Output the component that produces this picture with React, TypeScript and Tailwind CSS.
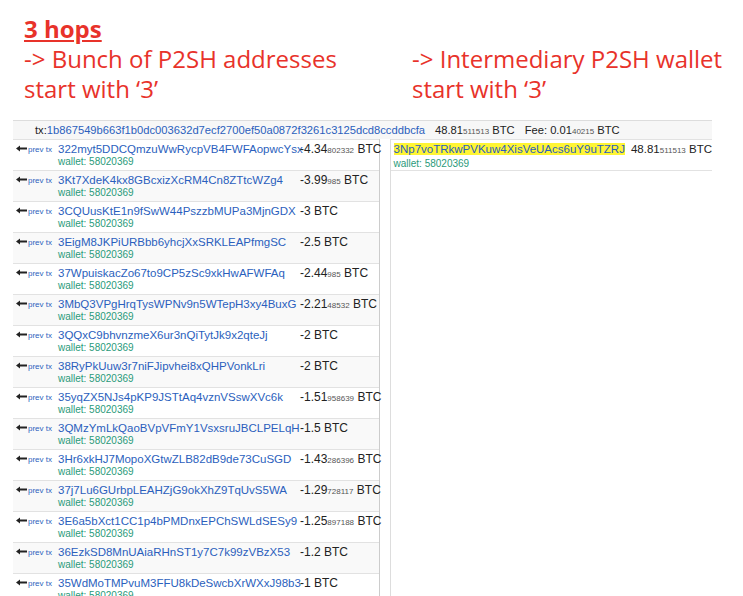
const rows: [string, string, string][] = [
  ["322myt5DDCQmzuWwRycpVB4FWFAopwcYsx", "-4.34", "802332"],
  ["3Kt7XdeK4kx8GBcxizXcRM4Cn8ZTtcWZg4", "-3.99", "985"],
  ["3CQUusKtE1n9fSwW44PszzbMUPa3MjnGDX", "-3", ""],
  ["3EigM8JKPiURBbb6yhcjXxSRKLEAPfmgSC", "-2.5", ""],
  ["37WpuiskacZo67to9CP5zSc9xkHwAFWFAq", "-2.44", "985"],
  ["3MbQ3VPgHrqTysWPNv9n5WTepH3xy4BuxG", "-2.21", "48532"],
  ["3QQxC9bhvnzmeX6ur3nQiTytJk9x2qteJj", "-2", ""],
  ["38RyPkUuw3r7niFJipvhei8xQHPVonkLri", "-2", ""],
  ["35yqZX5NJs4pKP9JSTtAq4vznVSswXVc6k", "-1.51", "958639"],
  ["3QMzYmLkQaoBVpVFmY1VsxsruJBCLPELqH", "-1.5", ""],
  ["3Hr6xkHJ7MopoXGtwZLB82dB9de73CuSGD", "-1.43", "286396"],
  ["37j7Lu6GUrbpLEAHZjG9okXhZ9TqUvS5WA", "-1.29", "728117"],
  ["3E6a5bXct1CC1p4bPMDnxEPChSWLdSESy9", "-1.25", "897188"],
  ["36EzkSD8MnUAiaRHnST1y7C7k99zVBzX53", "-1.2", ""],
  ["35WdMoTMPvuM3FFU8kDeSwcbXrWXxJ98b3", "-1", ""],
];

function Arrow() {
  return (
    <svg width="11" height="7" viewBox="0 0 11 7" className="inline-block mr-[1px]">
      <path d="M0 3.5 L4 0.5 L4 2.5 L11 2.5 L11 4.5 L4 4.5 L4 6.5 Z" fill="#222" />
    </svg>
  );
}

export default function App() {
  return (
    <div className="w-[743px] h-[596px] overflow-hidden bg-white relative" style={{ fontFamily: '"Liberation Sans", Arial, sans-serif' }}>
      <div className="flex pt-[14px] text-[#e8322a] text-[24px] leading-[30px]" style={{ fontFamily: '"Open Sans", sans-serif' }}>
        <div className="pl-[24px] w-[412px]">
          <div className="font-bold underline">3 hops</div>
          <div>-&gt; Bunch of P2SH addresses</div>
          <div>start with ‘3’</div>
        </div>
        <div className="pt-[30px]">
          <div>-&gt; Intermediary P2SH wallet</div>
          <div>start with ‘3’</div>
        </div>
      </div>
      <div className="absolute left-[13px] top-[120px] w-[699px]">
        <div className="h-[19px] bg-[#f7f7f7] border-t border-[#ddd] flex items-center text-[11.2px] text-[#222] pl-[22px] whitespace-nowrap">
          <span>tx:</span>
          <span className="text-[#2b5fbd]">1b867549b663f1b0dc003632d7ecf2700ef50a0872f3261c3125dcd8ccddbcfa</span>
          <span className="ml-[10px]">48.81<span className="text-[8px] text-[#555]">511513</span> BTC</span>
          <span className="ml-[10px]">Fee: 0.01<span className="text-[8px] text-[#555]">40215</span> BTC</span>
        </div>
        <div className="flex">
          <div className="w-[367px] border-r border-[#ccc]">
            {rows.map(([a, amt, small], i) => (
              <div key={i} className={`h-[31px] border-t border-[#e2e2e2] flex pt-[2px] whitespace-nowrap ${i % 2 ? "bg-[#f9f9f9]" : "bg-white"}`}>
                <div className="w-[45px] shrink-0 pl-[3px] pt-[3px] text-[8px] text-[#2b5fbd] flex items-start leading-[10px]">
                  <Arrow />prev tx
                </div>
                <div className="w-[242px] shrink-0">
                  <div className="text-[11.5px] leading-[14px] text-[#2b5fbd]">{a}</div>
                  <div className="text-[10px] leading-[12px] text-[#2a9a7a]">wallet: 58020369</div>
                </div>
                <div className="text-[12px] leading-[14px] text-[#222]">
                  {amt}<span className="text-[8px] text-[#555]">{small}</span> BTC
                </div>
              </div>
            ))}
          </div>
          <div className="w-[17px] border-r border-[#ddd]"></div>
          <div className="flex-1">
            <div className="h-[31px] border-t border-[#e2e2e2] pt-[2px] pl-[3px]">
              <div className="text-[11.5px] leading-[14px] text-[#222] whitespace-nowrap">
                <span className="bg-[#fff533] text-[#2b5fbd]">3Np7voTRkwPVKuw4XisVeUAcs6uY9uTZRJ</span>
                <span className="ml-[6px]">48.81<span className="text-[8px] text-[#555]">511513</span> BTC</span>
              </div>
              <div className="text-[10px] leading-[12px] text-[#2a9a7a]">wallet: 58020369</div>
            </div>
            <div className="h-[500px] border-t border-[#e2e2e2]"></div>
          </div>
        </div>
      </div>
    </div>
  );
}
